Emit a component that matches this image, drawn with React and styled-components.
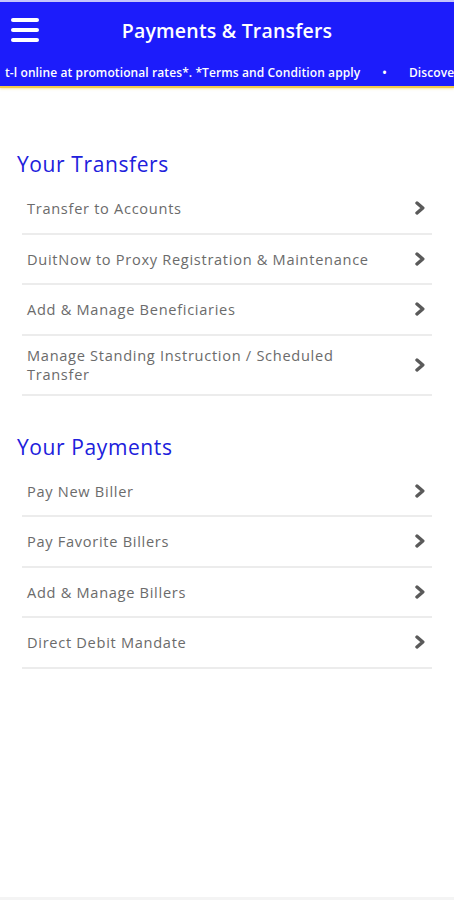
import React from "react";
import styled, { createGlobalStyle } from "styled-components";

const Global = createGlobalStyle`
  html, body { margin: 0; padding: 0; background: #fff; }
  body { font-family: "Open Sans", "Noto Sans", sans-serif; }
  #root { min-height: 900px; }
`;

const Page = styled.div`
  width: 454px;
  min-height: 900px;
  display: flex;
  flex-direction: column;
  background: #fff;
  border-top: 2px solid #c6c6ff;
  box-sizing: border-box;
  position: relative;
  &::after {
    content: "";
    position: absolute;
    left: 0; right: 0; bottom: 0;
    height: 3px;
    background: #f4f4f4;
  }
`;

const Header = styled.header`
  background: #1c1cfb;
  display: flex;
  flex-direction: column;
  border-bottom: 2px solid #f2c94c;
  box-shadow: 0 1px 2px rgba(242, 201, 76, 0.5);
`;

const TitleBar = styled.div`
  height: 56px;
  display: flex;
  align-items: center;
  justify-content: center;
  position: relative;
`;

const MenuButton = styled.button`
  position: absolute;
  left: 11px;
  top: 50%;
  transform: translateY(-50%);
  background: none;
  border: 0;
  padding: 0;
  width: 28px;
  height: 24px;
  display: flex;
  flex-direction: column;
  justify-content: space-between;
`;

const Bar = styled.span`
  display: block;
  height: 4px;
  border-radius: 2px;
  background: #fff;
`;

const Title = styled.h1`
  margin: 0;
  color: #fff;
  font-size: 19.5px;
  font-weight: 600;
  letter-spacing: 0.2px;
`;

const Ticker = styled.div`
  height: 28px;
  display: flex;
  align-items: center;
  white-space: nowrap;
  overflow: hidden;
  color: #fff;
  font-size: 12px;
  font-weight: 600;
  letter-spacing: 0.1px;
  padding-left: 5px;
  gap: 22px;
`;

const Content = styled.main`
  display: flex;
  flex-direction: column;
  padding: 64px 22px 0 22px;
`;

const Section = styled.section`
  display: flex;
  flex-direction: column;
  margin-bottom: 39px;
`;

const Heading = styled.h2`
  margin: 0 0 8px -5px;
  color: #2020dc;
  font-size: 21px;
  font-weight: 400;
  line-height: 24px;
  letter-spacing: 0.6px;
`;

const List = styled.ul`
  list-style: none;
  margin: 0;
  padding: 0;
`;

const Row = styled.li`
  display: flex;
  align-items: center;
  justify-content: space-between;
  min-height: ${(p) => (p.$tall ? 60 : 50.5)}px;
  border-bottom: 2px solid #ececec;
  box-sizing: border-box;
  padding: 0 6px 0 5px;
`;

const Label = styled.span`
  color: #6b6b6b;
  font-size: 14.6px;
  line-height: 18.5px;
  letter-spacing: 0.7px;
  max-width: 362px;
`;

const Chevron = () => (
  <svg width="12" height="14" viewBox="0 0 12 14" aria-hidden="true">
    <path d="M3 2 L8.8 7 L3 12" fill="none" stroke="#5a5a5a" strokeWidth="3.4" strokeLinecap="round" strokeLinejoin="round" />
  </svg>
);

const transfers = [
  "Transfer to Accounts",
  "DuitNow to Proxy Registration & Maintenance",
  "Add & Manage Beneficiaries",
  "Manage Standing Instruction / Scheduled Transfer",
];

const payments = [
  "Pay New Biller",
  "Pay Favorite Billers",
  "Add & Manage Billers",
  "Direct Debit Mandate",
];

export default function App() {
  return (
    <>
      <Global />
      <Page>
        <Header>
          <TitleBar>
            <MenuButton aria-label="Menu">
              <Bar />
              <Bar />
              <Bar />
            </MenuButton>
            <Title>Payments &amp; Transfers</Title>
          </TitleBar>
          <Ticker>
            <span>t-l online at promotional rates*. *Terms and Condition apply</span>
            <span>•</span>
            <span>Discover more</span>
          </Ticker>
        </Header>
        <Content>
          <Section>
            <Heading>Your Transfers</Heading>
            <List>
              {transfers.map((t) => (
                <Row key={t} $tall={t.length > 45}>
                  <Label>{t}</Label>
                  <Chevron />
                </Row>
              ))}
            </List>
          </Section>
          <Section>
            <Heading>Your Payments</Heading>
            <List>
              {payments.map((t) => (
                <Row key={t}>
                  <Label>{t}</Label>
                  <Chevron />
                </Row>
              ))}
            </List>
          </Section>
        </Content>
      </Page>
    </>
  );
}
